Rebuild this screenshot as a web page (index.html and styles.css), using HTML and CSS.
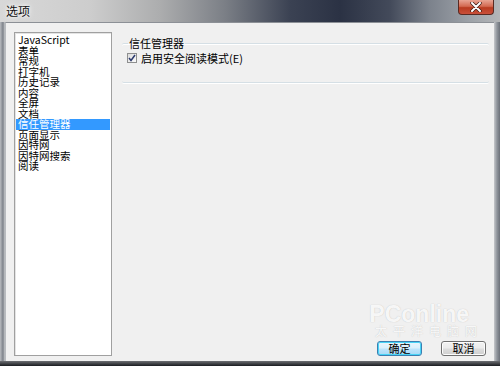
FILE: index.html
```html
<!DOCTYPE html>
<html lang="zh">
<head>
<meta charset="utf-8">
<title>选项</title>
<link rel="stylesheet" href="styles.css">
</head>
<body>
<div class="window">
  <div class="titlebar">
    <span class="title">选项</span>
    <div class="close"><svg width="14" height="10" viewBox="0 0 14 10"><path d="M3 1 L11 9 M11 1 L3 9" stroke="#3a1a14" stroke-width="3.4" stroke-linecap="round"/><path d="M3 1 L11 9 M11 1 L3 9" stroke="#fff" stroke-width="2" stroke-linecap="round"/></svg></div>
  </div>
  <div class="frame-mid">
    <div class="frame-left"></div>
    <div class="client">
      <ul class="list">
        <li>JavaScript</li>
        <li>表单</li>
        <li>常规</li>
        <li>打字机</li>
        <li>历史记录</li>
        <li>内容</li>
        <li>全屏</li>
        <li>文档</li>
        <li class="sel">信任管理器</li>
        <li>页面显示</li>
        <li>因特网</li>
        <li>因特网搜索</li>
        <li>阅读</li>
      </ul>
      <div class="panel">
        <fieldset class="group">
          <legend>信任管理器</legend>
          <label class="check"><span class="box"><svg width="8" height="8" viewBox="0 0 8 8"><path d="M1 4 L3 6.5 L7 1" fill="none" stroke="#2c3a6e" stroke-width="1.5"/></svg></span>启用安全阅读模式(E)</label>
        </fieldset>
        <div class="spacer">
          <div class="watermark"><div class="wm1">PConline</div><div class="wm2">太平洋电脑网</div></div>
        </div>
        <div class="buttons">
          <button class="btn default">确定</button>
          <button class="btn">取消</button>
        </div>
      </div>
    </div>
    <div class="frame-right"></div>
  </div>
  <div class="frame-bottom"></div>
</div>
</body>
</html>
```
FILE: styles.css
```css
html, body {
  margin: 0;
  padding: 0;
}
body {
  width: 500px;
  height: 366px;
  overflow: hidden;
  font-family: "Noto Sans CJK SC", "Liberation Sans", sans-serif;
  font-size: 11px;
  color: #000;
}
.window {
  width: 500px;
  height: 366px;
  display: flex;
  flex-direction: column;
  background: #9aa0a8;
}
.titlebar {
  height: 22px;
  flex: none;
  display: flex;
  align-items: flex-start;
  justify-content: space-between;
  background: linear-gradient(90deg, #d8d8d8 0%, #cdcdcd 18%, #acadae 32%, #7b7f86 45%, #3b4253 58%, #2b3244 68%, #434a5a 78%, #7c828c 86%, #9da2a8 94%, #b4b6b8 100%);
}
.title {
  margin: 4px 0 0 6px;
  font-size: 12px;
  line-height: 14px;
  color: #111;
  text-shadow: 0 0 6px #fff, 0 0 3px #fff;
}
.close {
  width: 36px;
  height: 15px;
  margin-right: 6px;
  border: 1px solid #5a2a22;
  border-top: none;
  border-radius: 0 0 4px 4px;
  box-sizing: border-box;
  background: linear-gradient(180deg, #e8a493 0%, #d36a52 45%, #b83b20 55%, #c9503a 100%);
  display: flex;
  align-items: center;
  justify-content: center;
}
.frame-mid {
  flex: 1;
  display: flex;
  min-height: 0;
}
.frame-left {
  width: 5px;
  background: linear-gradient(90deg, #b9bcc0, #7d828a 60%, #c8cacc);
}
.frame-right {
  width: 6px;
  background: linear-gradient(90deg, #c6c8cb, #8f949b 50%, #6c7179);
}
.frame-bottom {
  height: 5px;
  flex: none;
  background: linear-gradient(180deg, #6d6f73, #1a1c20);
}
.client {
  flex: 1;
  background: #f0f0f0;
  border-top: 1px solid #8c9096;
  border-left: 1px solid #b8bbbf;
  display: flex;
  padding: 9px 5px 5px 8px;
  gap: 10px;
}
.list {
  margin: 0;
  padding: 2px 1px;
  list-style: none;
  width: 98px;
  box-sizing: border-box;
  background: #fff;
  border: 1px solid #a0a0a0;
  box-shadow: inset 1px 1px 0 #e4e4e4;
}
.list li {
  height: 10.5px;
  line-height: 10.5px;
  padding-left: 2px;
  font-size: 10.5px;
  white-space: nowrap;
}
.list li.sel {
  background: #3399ff;
  color: #fff;
}
.panel {
  flex: 1;
  display: flex;
  flex-direction: column;
}
.group {
  margin: 5px 0 0 0;
  padding: 3px 6px 18px 5px;
  border: none;
  border-top: 1px solid #d5dfe5;
  border-bottom: 1px solid #d5dfe5;
  box-shadow: 0 1px 0 #fff, inset 0 1px 0 #fff;
  border-radius: 2px;
  background: #f0f0f0;
}
.group legend {
  padding: 0 1px;
  margin-left: 1px;
  font-size: 11px;
  line-height: 12px;
}
.check {
  display: flex;
  align-items: center;
  gap: 4px;
  font-size: 11px;
  line-height: 12px;
}
.box {
  width: 10px;
  height: 10px;
  box-sizing: border-box;
  border: 1px solid #8e8f8f;
  background: linear-gradient(135deg, #dcdcdc, #fbfbfb);
  display: flex;
  align-items: center;
  justify-content: center;
}
.spacer {
  flex: 1;
  position: relative;
}
.watermark {
  position: absolute;
  right: 20px;
  bottom: 4px;
  text-align: right;
  color: rgba(255,255,255,0.9);
  text-shadow: 0 0 1px rgba(150,150,150,0.6);
}
.wm1 {
  font-family: "Liberation Sans", sans-serif;
  font-weight: bold;
  font-size: 23px;
  line-height: 20px;
}
.wm2 {
  font-size: 12px;
  line-height: 13px;
  letter-spacing: 6px;
  margin-right: -14px;
}
.buttons {
  display: flex;
  justify-content: flex-end;
  gap: 19px;
  padding-right: 3px;
}
.btn {
  width: 45px;
  height: 15px;
  padding: 0;
  font-family: "Noto Sans CJK SC", sans-serif;
  font-size: 11px;
  line-height: 11px;
  color: #000;
  border: 1px solid #707070;
  border-radius: 3px;
  background: linear-gradient(180deg, #f2f2f2 0%, #ebebeb 48%, #dddddd 52%, #cfcfcf 100%);
  box-shadow: inset 0 0 0 1px #fcfcfc;
}
.btn.default {
  border-color: #3c7fb1;
  background: linear-gradient(180deg, #eaf6fd 0%, #d9f0fc 48%, #bee6fd 52%, #a7d9f5 100%);
  box-shadow: inset 0 0 0 1px #48d4f6;
}
```
